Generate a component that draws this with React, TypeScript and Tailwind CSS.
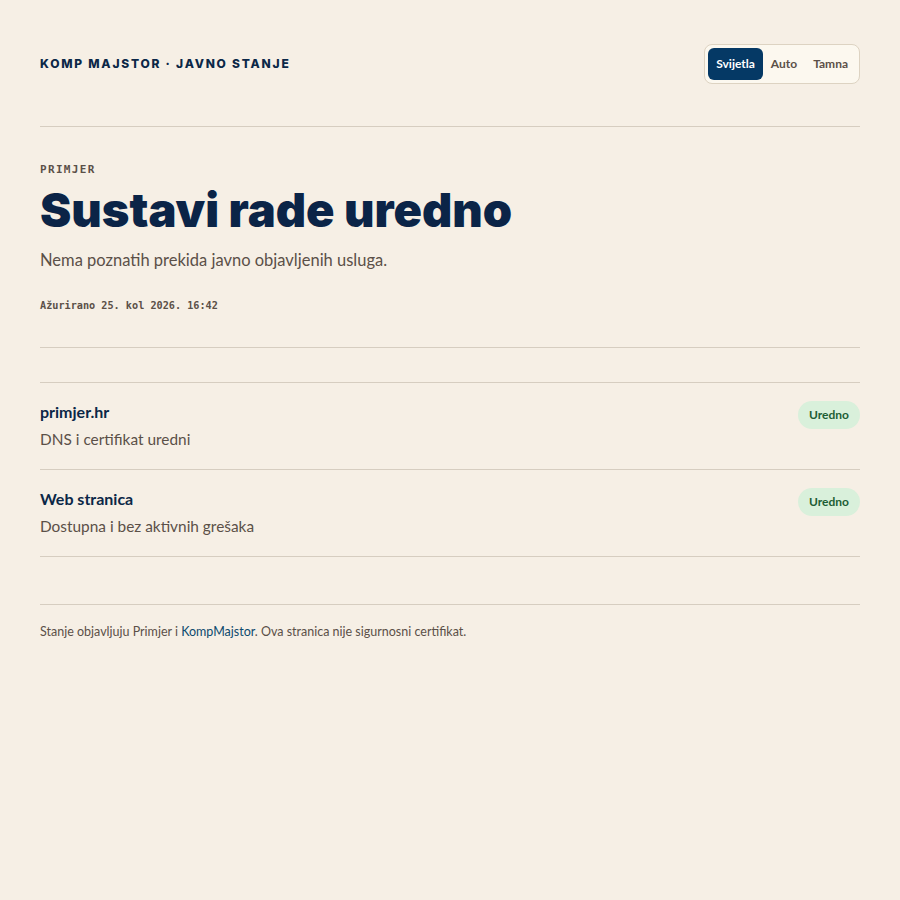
const services = [
  { name: 'primjer.hr', detail: 'DNS i certifikat uredni', status: 'Uredno' },
  { name: 'Web stranica', detail: 'Dostupna i bez aktivnih grešaka', status: 'Uredno' },
];

const modes = ['Svijetla', 'Auto', 'Tamna'];

export default function App() {
  const active = 'Svijetla';

  return (
    <div className="min-h-screen bg-[#f6efe5] font-['Lato',sans-serif] text-[#5b5048]">
      <div className="mx-auto max-w-[900px] px-10">
        <header className="flex items-center justify-between pt-11 pb-[42px]">
          <div className="font-['Inter',sans-serif] text-[12px] font-extrabold tracking-[0.148em] text-[#0b2747]">
            KOMP MAJSTOR · JAVNO STANJE
          </div>
          <div className="flex rounded-lg border border-[#ddd3c2] bg-[#fcf8ef] p-[3px]">
            {modes.map((m) => (
              <button
                key={m}
                className={`h-8 rounded-md px-2 text-[12px] font-bold ${
                  m === active ? 'bg-[#053965] text-white' : 'text-[#5b5048]'
                }`}
              >
                {m}
              </button>
            ))}
          </div>
        </header>

        <section className="border-t border-[#d6cdc0] pt-[35px] pb-[34px]">
          <p className="font-['DejaVu_Sans_Mono',monospace] text-[11px] font-bold tracking-[0.12em] text-[#5b5048]">
            PRIMJER
          </p>
          <h1 className="mt-[3px] font-['Inter',sans-serif] text-[47px] leading-[56px] font-black text-[#0b2447]">
            Sustavi rade uredno
          </h1>
          <p className="mt-[8px] text-[16.5px] leading-7 text-[#5b5048]">Nema poznatih prekida javno objavljenih usluga.</p>
          <p className="mt-[24px] font-['DejaVu_Sans_Mono',monospace] text-[10.2px] leading-[15px] font-bold text-[#5b5048]">
            Ažurirano 25. kol 2026. 16:42
          </p>
        </section>

        <div className="border-t border-[#d6cdc0] pt-[34px]">
          <div className="border-t border-[#d6cdc0]">
            {services.map((s) => (
              <div key={s.name} className="flex items-start justify-between border-b border-[#d6cdc0] pt-[17px] pb-[18px]">
                <div>
                  <div className="text-[16px] leading-6 font-bold text-[#0b2747]">{s.name}</div>
                  <div className="mt-[3px] text-[15.4px] leading-6 text-[#5b5048]">{s.detail}</div>
                </div>
                <span className="mt-[1px] rounded-full bg-[#d9f0db] px-[11px] py-[6px] text-[12px] leading-4 font-bold text-[#1d5e35]">
                  {s.status}
                </span>
              </div>
            ))}
          </div>
        </div>

        <footer className="mt-[47px] border-t border-[#d6cdc0] pt-[18px] text-[12.5px] text-[#5b5048]">
          Stanje objavljuju Primjer i <a className="text-[#0c4a6e]">KompMajstor</a>. Ova stranica nije sigurnosni certifikat.
        </footer>
      </div>
    </div>
  );
}
